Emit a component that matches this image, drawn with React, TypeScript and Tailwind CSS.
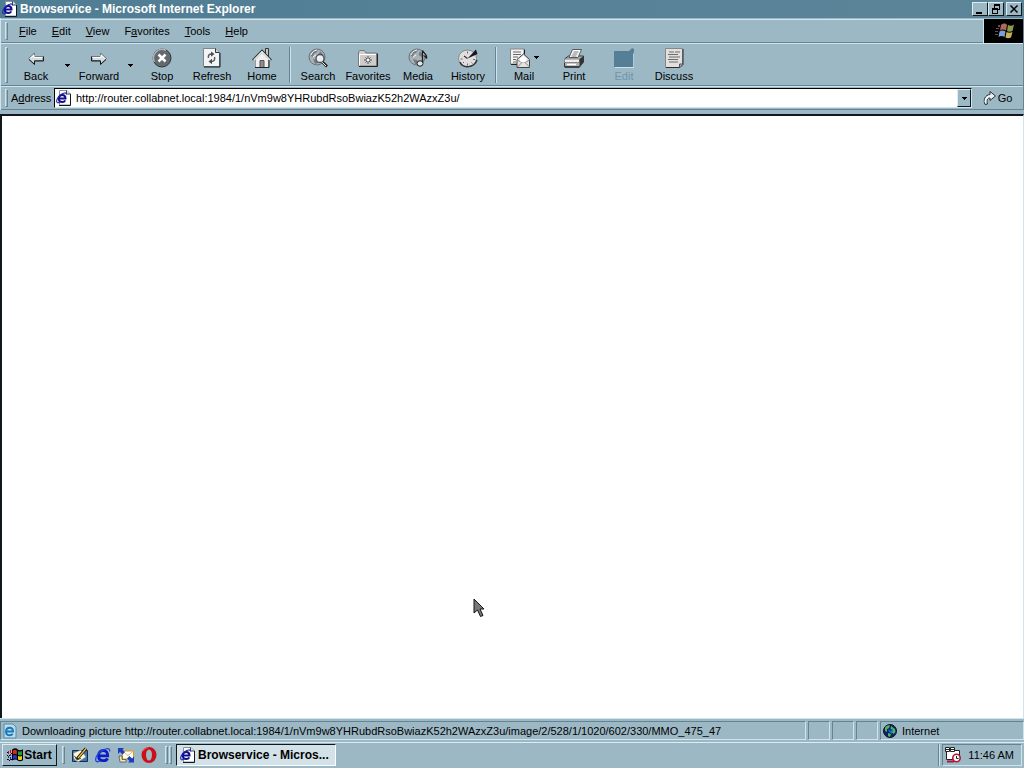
import React from 'react';

interface ToolButtonProps {
  label: string;
  icon: React.ReactNode;
  disabled?: boolean;
}

const Caret: React.FC = () => (
  <svg className="w-[5px] h-[3px]" viewBox="0 0 5 3" shapeRendering="crispEdges">
    <path d="M0 0h5v1H4v1H3v1H2V2H1V1H0z" fill="#000" />
  </svg>
);

const PageIcon: React.FC = () => (
  <svg className="w-4 h-4 shrink-0" viewBox="0 0 16 16">
    <path d="M3.5.5H11L14.5 4v11h-11z" fill="#fff" stroke="#8294a0" />
    <path d="M14.5 4v11.500H3" fill="none" stroke="#101820" />
    <path d="M10.500.5V4h4" fill="#dde6ea" stroke="#101820" strokeWidth=".8" />
    <path d="M3 8.500h6.500C9.500 6.300 8.300 5 6.400 5 4.300 5 2.800 6.500 2.800 8.500s1.400 3.500 3.500 3.500c1.500 0 2.400-.6 2.900-1.700" fill="none" stroke="#10108c" strokeWidth="2" />
    <path d="M10.500 4.500C10.800 2 7 2.600 4 5.200 1.500 7.500 0 10.800 1 12.300c.6.8 1.600.5 2.600 0" fill="none" stroke="#2424a8" strokeWidth="1.100" />
  </svg>
);

const BlueE: React.FC = () => (
  <svg className="w-4 h-4" viewBox="0 0 16 16">
    <path d="M4 8.800h8.700C12.700 5.400 11 3.500 8.400 3.500 5.500 3.500 3.500 5.700 3.500 8.800s2 4.900 4.900 4.900c2.100 0 3.400-.9 4.100-2.400" fill="none" stroke="#0a1cc4" strokeWidth="2.800" />
    <path d="M14.500 4.500C15.600.5 11 .8 6.500 4 2.500 7 .2 11 .8 13.500c.4 1.700 2.400 1.500 4 .4" fill="none" stroke="#2848e0" strokeWidth="1.300" />
  </svg>
);

const Flag: React.FC = () => (
  <svg className="w-4 h-4" viewBox="0 0 16 16">
    <path d="M5 2.500C7.500.8 9.500.8 10.700 2.500c1.300 1 3.300 1 5.300-.3v11c-2 1.300-4 1.300-5.300.3-1.200-1.300-3.200-1.300-5.700 0z" fill="#000" />
    <path d="M6 3.500c1.300-.9 2.900-.9 3.900-.1v4c-1.200-.8-2.600-.8-3.900 0z" fill="#e02818" />
    <path d="M11 4c1.400.7 2.600.7 4 0v4c-1.400.6-2.600.6-4 0z" fill="#18a030" />
    <path d="M6 8.500c1.300-.8 2.700-.8 3.900 0v3.700c-1.200-.8-2.600-.8-3.900 0z" fill="#2038d0" />
    <path d="M11 9c1.400.6 2.600.6 4 0v3.500c-1.400.7-2.600.7-4 0z" fill="#e8d020" />
    <path d="M3 3h1v3H3zM3 7h1v2H3zM1 4h1v3H1z" fill="#a01830" />
    <path d="M3 10h1v3H3zM1 9h1v2H1zM1 12h1v1H1z" fill="#182890" />
    <path d="M0 5h1v1H0zM0 8h1v1H0zM0 12h1v1H0zM2 8h1v1H2zM2 13h1v1H2zM4 6h1v1H4zM4 12h1v1H4z" fill="#000" />
  </svg>
);

const Arrow: React.FC<{ right?: boolean }> = ({ right }) => (
  <svg className={`w-5 h-5 ${right ? '-scale-x-100' : ''}`} viewBox="0 0 20 20">
    <path d="M2.5 10.500L8.500 5v3.500H17v4H8.500V16z" fill="#d5dde1" stroke="#6f7a80" />
    <path d="M3 11.500L8.500 16.500V13H17.500V8.500" fill="none" stroke="#11181c" />
    <path d="M4.500 10.500L8 7v2.500h8.500" fill="none" stroke="#fff" />
  </svg>
);

const Stop: React.FC = () => (
  <svg className="w-5 h-5" viewBox="0 0 20 20">
    <circle cx="10" cy="10" r="9" fill="#63696d" stroke="#303436" />
    <path d="M2.500 14A8.500 8.500 0 0 1 14 2.500" fill="none" stroke="#aeb4b7" strokeWidth="1.500" />
    <path d="M6.500 6.500l7 7M13.500 6.500l-7 7" stroke="#fff" strokeWidth="2.500" />
  </svg>
);

const Refresh: React.FC = () => (
  <svg className="w-5 h-5" viewBox="0 0 20 20">
    <path d="M1.500.5H13.500L17.500 4.500V18.500H1.500z" fill="#f2f4f5" stroke="#7b868c" />
    <path d="M18 5v14H2" fill="none" stroke="#11181c" />
    <path d="M13.500.5V4.500h4" fill="#ccd3d6" stroke="#333" />
    <path d="M6.500 10c-.5-2.700.5-4 3-4M12.500 9c.6 3-.5 4.500-3 4.500" fill="none" stroke="#5a5f62" strokeWidth="1.500" />
    <path d="M9 3.500L12.500 6 9 8.800zM10 10.800L6.500 13.500l3.500 2.700z" fill="#4a4f52" />
  </svg>
);

const Home: React.FC = () => (
  <svg className="w-5 h-5" viewBox="0 0 20 20">
    <path d="M13.500.5h3v9h-3z" fill="#c9c4c4" stroke="#333" />
    <path d="M3.500 11L10 4.500l6.500 6.500v8.500h-13z" fill="#f0eeee" stroke="#999" />
    <path d="M.5 12L10 2l9.500 10" fill="none" stroke="#333" strokeWidth="1.200" />
    <path d="M2 12L10 3.800l8 8.200" fill="none" stroke="#e8e8e8" strokeWidth="1.500" />
    <path d="M8 12.500h4v7H8z" fill="#8d8d8d" stroke="#555" />
    <path d="M17 12v7.500H3" fill="none" stroke="#222" />
  </svg>
);

const Globe: React.FC = () => (
  <>
    <circle cx="9" cy="9" r="8" fill="#a9b2b7" stroke="#6b7378" />
    <path d="M3 5c2-3 5-3.500 7-3l-2 3-2 .5-1 3.500-2-1zM12 3l3.500 4-2 2-3-2zM5 11l4 1 1 3-3 1z" fill="#737c81" />
    <path d="M3 7c1-3 3-4.500 6-5M5 9l3-2" fill="none" stroke="#f4f8fa" />
  </>
);

const Search: React.FC = () => (
  <svg className="w-5 h-5" viewBox="0 0 20 20">
    <Globe />
    <path d="M14 13.500L19 18.500" stroke="#222" strokeWidth="2.600" />
    <path d="M14 14L18 18" stroke="#eee" />
    <circle cx="12" cy="10.500" r="4" fill="#e8eef1" stroke="#4c5154" strokeWidth="1.300" />
    <path d="M9.800 10c.4-1.200 1.200-1.700 2.300-1.700" fill="none" stroke="#fff" />
  </svg>
);

const Favorites: React.FC = () => (
  <svg className="w-5 h-5" viewBox="0 0 20 20">
    <path d="M.5 6V4l1-1.500h5L8 5h10.500v13H.5z" fill="#cfcccc" stroke="#77797b" />
    <path d="M19.5 5.500V18.500H1" fill="none" stroke="#222" />
    <path d="M1.500 17.500V6.500h16.500" fill="none" stroke="#fff" />
    <path d="M10 8v8M6 12h8M7.500 9.500l5 5M12.500 9.500l-5 5" stroke="#303336" strokeWidth=".8" />
    <circle cx="10" cy="12" r="1.200" fill="#fff" />
  </svg>
);

const Media: React.FC = () => (
  <svg className="w-5 h-5" viewBox="0 0 20 20">
    <Globe />
    <path d="M14.500 15V2.500c1 3 5 3.500 4 8-.5-2-1.500-2.500-3-3" fill="#dcdcdc" stroke="#1b1d1f" strokeWidth="1.300" />
    <ellipse cx="12" cy="15.500" rx="3" ry="2.700" fill="#e7e7e7" stroke="#1b1d1f" />
  </svg>
);

const History: React.FC = () => (
  <svg className="w-5 h-5" viewBox="0 0 20 20">
    <ellipse cx="9.500" cy="10.500" rx="9" ry="8.500" fill="#e0dede" stroke="#888" />
    <path d="M2 14c2.500 6.500 14 6.500 17-2" fill="none" stroke="#333" strokeWidth="1.500" />
    <path d="M9.500 10.500L18 1.500 19.500 6z" fill="#151719" />
    <path d="M9.500 10.500L6 8" stroke="#333" strokeWidth="1.300" />
    <path d="M9.500 3.500v2M2.500 11h2M9.500 15.500v2M15 11.500h2M5 15l1-1M14.500 15.500l-1-1" stroke="#666" />
  </svg>
);

const Mail: React.FC = () => (
  <svg className="w-5 h-5" viewBox="0 0 20 20">
    <path d="M.5 1h13.500V16H.5z" fill="#f4f3f3" stroke="#888" />
    <path d="M3 4h8M3 6.500h8M3 9h5M3 11.500h3M3 14h3" stroke="#666" />
    <path d="M14.500 1.500v5M1 16.500h6" stroke="#222" />
    <path d="M7 11.500l6.500-5.500L19.500 11.500v8H7z" fill="#e6e2e2" stroke="#444" />
    <path d="M7.500 19l4.500-4.500h3l4.500 4.500M7 12l5 2.500M19.500 12l-4.500 2.500" fill="none" stroke="#888" />
    <path d="M10 10.500l3.500-3 3 3v2.500l-2 1.500h-2.500l-2-1.500z" fill="#fff" />
  </svg>
);

const Print: React.FC = () => (
  <svg className="w-5 h-5" viewBox="0 0 20 20">
    <path d="M.5 11l4-3h15v6l-4 5H.5z" fill="#b4b2b2" stroke="#343638" />
    <path d="M5 9.500L8.500 1.500H17.500L14 9.500z" fill="#fff" stroke="#55595c" />
    <path d="M9.500 4h5M8.500 6h5M7.500 8h5" stroke="#777" />
    <path d="M.5 11h15v3.500H.5z" fill="#ededed" stroke="#888" />
    <path d="M15.500 11v8L19.500 14V8z" fill="#333" />
    <path d="M3 16.500h9" stroke="#fff" strokeWidth="1.500" />
    <path d="M1 19h14.500" stroke="#111" />
  </svg>
);

const Edit: React.FC = () => (
  <svg className="w-5 h-5" viewBox="0 0 20 20">
    <path d="M0 3h15l3-3 2 1v3l-1 2v13H0z" fill="#557f96" />
    <path d="M1 19.500h19V6" fill="none" stroke="#cbe0e9" />
  </svg>
);

const Discuss: React.FC = () => (
  <svg className="w-5 h-5" viewBox="0 0 20 20">
    <path d="M1.5.5h17v16l-3 3h-14z" fill="#e3dfdd" stroke="#85898b" />
    <path d="M19 1v15.500l-3 3H2" fill="none" stroke="#2b2d2f" />
    <path d="M5 4h5M11 4h5M4 6.500h10M5 9h11M4 11.500h10M5 14h9" stroke="#6a6d70" />
    <path d="M18.500 16h-3v3.500" fill="#aaa" stroke="#555" />
  </svg>
);

const WindowsLogo: React.FC = () => (
  <svg className="w-6 h-[18px]" viewBox="0 0 24 18">
    <path d="M9 3C11 1 14 1 15 3l-1 5.500c-2-1.500-4-1.500-6 0z" fill="#b06858" />
    <path d="M16 3c2 1 4 1 6-.5L20.500 9c-2 1-4 1-5.500 0z" fill="#8c9a50" />
    <path d="M7.500 9.500c2-1.500 4-1.500 6 0l-1 5.500c-2-1.500-4-1.500-6 0z" fill="#7ba0d8" />
    <path d="M14.500 10c2 1 4 1 6 0L19 15.500c-2 1-4 1-5.500 0z" fill="#c8b058" />
    <path d="M6 3h2v2H6zM4 6h3v1H4zM3 9h3v1H3zM3 12h3v1H3z" fill="#704858" />
  </svg>
);

const GoArrow: React.FC = () => (
  <svg className="w-4 h-4" viewBox="0 0 16 16">
    <path d="M3 14.500C1 10 3 5 8 4.500V1.500L13.500 6 8 10.500V8C5.500 8 4.500 10.500 5.500 14z" fill="#e7eef2" stroke="#26303a" />
    <path d="M3 12C3.500 7.500 5.500 6 9 6" fill="none" stroke="#fff" />
  </svg>
);

const DesktopIcon: React.FC = () => (
  <svg className="w-4 h-4" viewBox="0 0 16 16">
    <path d="M.5 3.500h15v11H.5z" fill="#3c78b0" stroke="#102c50" />
    <path d="M1.500 6L9 3l5 7-8 5-4-3z" fill="#fff8dc" stroke="#888" strokeWidth=".6" />
    <path d="M4.500 12.500L14 1.500" stroke="#15191c" strokeWidth="3" />
    <path d="M6 11l8-9.500" stroke="#f0bc30" strokeWidth="1.300" />
    <path d="M2.500 9L5 12.500l4-1" fill="none" stroke="#444" />
  </svg>
);

const OutlookIcon: React.FC = () => (
  <svg className="w-4 h-4" viewBox="0 0 16 16">
    <path d="M4.500 4h11v8h-11z" fill="#fff" stroke="#d89a20" />
    <path d="M5 4.500l5 4 5-4" fill="none" stroke="#e8b850" />
    <path d="M0 1h6l-1.500 1.500L7 5 4.500 7.500 2 5 0 7z" fill="#203cbc" />
    <path d="M16 15.500h-6l1.500-1.500L9 11.500 11.500 9l2.500 2.500L16 9.500z" fill="#203cbc" />
    <path d="M1 9h3v3.500h4V15H2z" fill="#f4e8b0" stroke="#3b4650" strokeWidth=".7" />
  </svg>
);

const OperaIcon: React.FC = () => (
  <svg className="w-4 h-4" viewBox="0 0 16 16">
    <path fillRule="evenodd" d="M8 0a7.500 8 0 1 0 0 16A7.500 8 0 1 0 8 0zm0 2.500a3 5.500 0 1 1 0 11 3 5.500 0 1 1 0-11z" fill="#cc1018" />
    <path d="M2 4C3 1.800 5 .8 7 .8" fill="none" stroke="#f06060" />
  </svg>
);

const Earth: React.FC = () => (
  <svg className="w-[14px] h-[14px]" viewBox="0 0 14 14">
    <circle cx="7" cy="7" r="6.500" fill="#12205c" stroke="#0b1424" />
    <path d="M2 4c1-2 3-3 5-2.500L6 4 4 5v3L2 7zM8 2l4 3 .5 3-2 2-2-2 1-2-2-1zM5 9l3 1-1 3-2-1z" fill="#48b868" />
    <path d="M5 5l3 2 2-3-1 6-3-2z" fill="#2468d8" />
  </svg>
);

const SchedulerIcon: React.FC = () => (
  <svg className="w-4 h-4" viewBox="0 0 16 16">
    <path d="M1.500 3.500h13v9h-13z" fill="#fff" stroke="#222" />
    <path d="M.5.5h4v4h-4zM5.500.5h4v4h-4z" fill="#fff" stroke="#222" />
    <path d="M1 2.500h3M6 2.500h3" stroke="#222" />
    <path d="M2 14.500h7" stroke="#b01838" strokeWidth="2" />
    <circle cx="11.500" cy="11" r="3.700" fill="#fff" stroke="#b01838" strokeWidth="1.600" />
    <path d="M11.500 9v2.500h2" fill="none" stroke="#222" />
  </svg>
);

const Grip: React.FC = () => (
  <div className="w-[3px] shrink-0 self-stretch my-[2px] border border-t-[#cfe4ec] border-l-[#cfe4ec] border-r-[#648494] border-b-[#648494]" />
);

const Divider: React.FC = () => (
  <div className="w-[6px] self-stretch py-[2px] flex justify-center">
    <div className="w-[2px] border-l border-l-[#648494] border-r border-r-[#cfe4ec]" />
  </div>
);

const ToolButton: React.FC<ToolButtonProps> = ({ label, icon, disabled }) => (
  <button
    disabled={disabled}
    className="w-[50px] shrink-0 flex flex-col items-center gap-px text-black disabled:text-[#6f95a9]"
  >
    {icon}
    <span className="leading-[14px]">{label}</span>
  </button>
);

const menus = [
  ['', 'F', 'ile'],
  ['', 'E', 'dit'],
  ['', 'V', 'iew'],
  ['F', 'a', 'vorites'],
  ['', 'T', 'ools'],
  ['', 'H', 'elp'],
];

const raised =
  'border border-t-[#dcecf2] border-l-[#dcecf2] border-r-[#10181c] border-b-[#10181c] bg-[#9db8c5]';
const band = 'flex items-center border-b border-b-[#648494] border-t border-t-[#cfe4ec] pl-[4px]';
const sunken = 'border border-t-[#648494] border-l-[#648494] border-r-[#cfe4ec] border-b-[#cfe4ec]';

const App: React.FC = () => {
  return (
    <div className="h-screen flex flex-col overflow-hidden bg-[#9db8c5] font-['Liberation_Sans',Arial,sans-serif] text-[11px] leading-[14px] text-black cursor-default">
      <header className="h-[18px] shrink-0 flex items-center px-[2px] bg-linear-to-r from-[#4f7d94] to-[#5d859a] text-white">
        <PageIcon />
        <h1 className="ml-[2px] flex-1 font-bold text-[12px] leading-[14px]">Browservice - Microsoft Internet Explorer</h1>
        <button aria-label="Minimize" className={`w-4 h-[14px] flex items-center justify-center ${raised}`}>
          <svg className="w-3 h-3" viewBox="0 0 12 12" shapeRendering="crispEdges">
            <path d="M2 9h6v2H2z" />
          </svg>
        </button>
        <button aria-label="Restore" className={`w-4 h-[14px] flex items-center justify-center ${raised}`}>
          <svg className="w-3 h-3" viewBox="0 0 12 12" shapeRendering="crispEdges">
            <path fillRule="evenodd" d="M4 1h6v6H8v4H2V5h2zM5 3v2h3v1h1V3zM3 7v3h4V7z" />
          </svg>
        </button>
        <button aria-label="Close" className={`ml-[2px] w-4 h-[14px] flex items-center justify-center ${raised}`}>
          <svg className="w-3 h-3" viewBox="0 0 12 12">
            <path d="M2.500 2.500l7 7M9.500 2.500l-7 7" stroke="#000" strokeWidth="1.500" />
          </svg>
        </button>
      </header>

      <div className="shrink-0 pt-px border-x border-l-[#cfe4ec] border-r-[#648494]">
        <div className="flex h-6">
          <nav className={`flex-1 ${band}`}>
            <Grip />
            <div className="flex gap-px pl-1">
              {menus.map(([before, key, after]) => (
                <button key={after} className="px-[7px]">
                  {before}
                  <span className="underline">{key}</span>
                  {after}
                </button>
              ))}
            </div>
          </nav>
          <div className="w-10 flex items-center justify-center bg-black border-l border-l-[#cfe4ec]">
            <WindowsLogo />
          </div>
        </div>

        <div className={`h-[43px] pt-px ${band}`}>
          <Grip />
          <div className="flex items-center self-stretch pl-[3px]">
            <ToolButton label="Back" icon={<Arrow />} />
            <button aria-label="Back history" className="w-[13px] flex justify-center"><Caret /></button>
            <ToolButton label="Forward" icon={<Arrow right />} />
            <button aria-label="Forward history" className="w-[13px] flex justify-center"><Caret /></button>
            <ToolButton label="Stop" icon={<Stop />} />
            <ToolButton label="Refresh" icon={<Refresh />} />
            <ToolButton label="Home" icon={<Home />} />
            <Divider />
            <ToolButton label="Search" icon={<Search />} />
            <ToolButton label="Favorites" icon={<Favorites />} />
            <ToolButton label="Media" icon={<Media />} />
            <ToolButton label="History" icon={<History />} />
            <Divider />
            <ToolButton
              label="Mail"
              icon={
                <span className="flex items-center gap-1">
                  <Mail />
                  <Caret />
                </span>
              }
            />
            <ToolButton label="Print" icon={<Print />} />
            <ToolButton label="Edit" icon={<Edit />} disabled />
            <ToolButton label="Discuss" icon={<Discuss />} />
          </div>
        </div>

        <div className={`h-6 ${band}`}>
          <Grip />
          <label htmlFor="address" className="w-[46px] pl-[3px] shrink-0">
            A<span className="underline">d</span>dress
          </label>
          <div className="flex-1 min-w-0 h-5 flex items-center gap-1 pl-px bg-white border border-t-black border-l-black border-r-[#cfe4ec] border-b-[#cfe4ec]">
            <PageIcon />
            <input
              id="address"
              type="text"
              className="flex-1 min-w-0 bg-white outline-none"
              defaultValue="http://router.collabnet.local:1984/1/nVm9w8YHRubdRsoBwiazK52h2WAzxZ3u/"
            />
            <button aria-label="Show addresses" className={`w-[14px] self-stretch flex items-center justify-center ${raised}`}>
              <Caret />
            </button>
          </div>
          <button className="w-[51px] pr-px flex items-center justify-center">
            <GoArrow />
            Go
          </button>
        </div>
      </div>

      <main className="relative flex-1 mt-1 bg-white border-t-2 border-l-2 border-t-[#10181c] border-l-[#10181c] border-r border-r-[#cfe4ec]">
        {/* mouse pointer */}
        <svg className="absolute left-[46.1%] top-[80%] w-3 h-5" viewBox="0 0 12 20">
          <path d="M1 1v14l3.500-3 3 6.500 2.500-1-3-6.500H11z" fill="#77797b" stroke="#151515" />
        </svg>
      </main>

      <footer className="shrink-0 h-6 pt-[2px] pb-[2px] flex gap-[2px] border-t border-t-[#cfe4ec]">
        <div className={`flex-1 min-w-0 flex items-center gap-1 pl-px whitespace-nowrap overflow-hidden ${sunken}`}>
          <svg className="w-4 h-4 shrink-0" viewBox="0 0 16 16">
            <path d="M2 1h9l3 3v11H2z" fill="#b9dcef" stroke="#568ca8" />
            <path d="M4 8.500h7C11 6 9.500 4.800 7.800 4.800 5.500 4.800 4 6.500 4 8.700s1.500 3.500 3.700 3.500c1.500 0 2.500-.6 3-1.500" fill="none" stroke="#1979b5" strokeWidth="1.900" />
          </svg>
          Downloading picture http://router.collabnet.local:1984/1/nVm9w8YHRubdRsoBwiazK52h2WAzxZ3u/image/2/528/1/1020/602/330/MMO_475_47
        </div>
        <div className={`w-[22px] ${sunken}`} />
        <div className={`w-[22px] ${sunken}`} />
        <div className={`w-[22px] ${sunken}`} />
        <div className={`w-36 flex items-center gap-[5px] pl-[2px] ${sunken}`}>
          <Earth />
          Internet
        </div>
      </footer>

      <div className="h-[26px] shrink-0 flex items-center px-[2px] pb-px border-t border-t-[#dcecf2]">
        <button className={`w-[55px] h-[22px] flex items-center justify-center gap-px font-bold text-[12px] ${raised}`}>
          <Flag />
          Start
        </button>
        <div className="flex h-[22px] ml-[5px]">
          <Grip />
        </div>
        <div className="flex gap-[7px] ml-[7px]">
          <button aria-label="Show Desktop"><DesktopIcon /></button>
          <button aria-label="Internet Explorer"><BlueE /></button>
          <button aria-label="Outlook Express"><OutlookIcon /></button>
          <button aria-label="Opera"><OperaIcon /></button>
        </div>
        <div className="flex h-[22px] ml-2 mr-1 gap-px">
          <Grip />
          <Grip />
        </div>
        <button className="w-40 h-[22px] flex items-center gap-[2px] pl-[3px] font-bold text-[12px] bg-[#d3e1e8] border border-t-[#10181c] border-l-[#10181c] border-r-white border-b-white">
          <PageIcon />
          Browservice - Micros...
        </button>
        <div className="flex-1" />
        <div className="h-[22px] border-l border-l-[#648494] border-r border-r-[#cfe4ec] mr-[2px]" />
        <div className={`w-[80px] h-[22px] flex items-center justify-between pl-[2px] pr-[7px] ${sunken}`}>
          <SchedulerIcon />
          <time>11:46 AM</time>
        </div>
      </div>
    </div>
  );
};

export default App;
